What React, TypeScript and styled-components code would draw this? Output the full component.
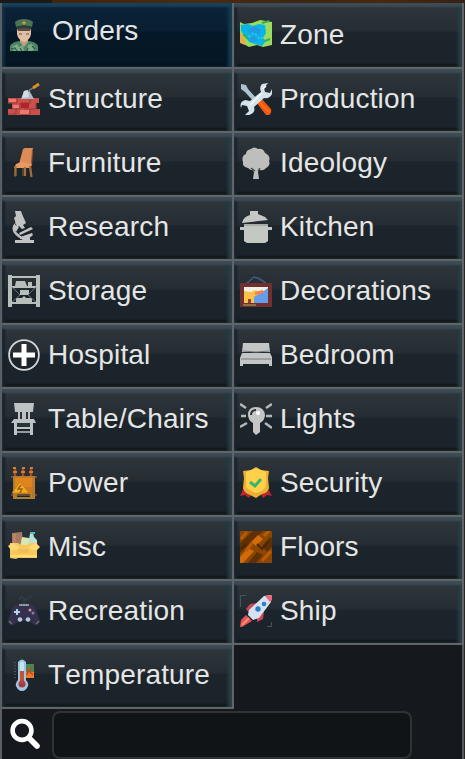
import React from "react";
import styled, { createGlobalStyle } from "styled-components";

const GlobalStyle = createGlobalStyle`
  *, *::before, *::after { box-sizing: border-box; }
  body { margin: 0; background: #15191e; overflow: hidden; }
`;

const Window = styled.main`
  width: 465px;
  height: 759px;
  display: flex;
  flex-direction: column;
  overflow: hidden;
  background: #15191e;
  border-right: 1px solid #29271e;
  font-family: "Liberation Sans", Arial, sans-serif;
`;

const Scenery = styled.div`
  height: 3px;
  flex: none;
  background: linear-gradient(90deg, #1c1a18 52px, #40250f 52px, #4a2b12 200px, #3b2614 300px, #49280f 380px, #352315);
`;

const Panel = styled.div`
  flex: 1;
  display: flex;
  flex-direction: column;
  border-left: 2px solid #5a5f65;
  border-right: 2px solid #535b65;
`;

const Menu = styled.nav`
  display: grid;
  grid-template-columns: 232px 228px;
  grid-template-rows: 66px;
  grid-auto-rows: 64px;
  height: 706px;
  margin-right: -2px;
`;

const Entry = styled.button<{ $active?: boolean; $edge?: boolean; $first?: boolean }>`
  display: flex;
  align-items: flex-start;
  gap: 8px;
  width: ${(p) => (p.$edge ? 230 : 232)}px;
  height: 100%;
  margin: 0;
  padding: ${(p) => (p.$first ? 16 : 14)}px 0 0 6px;
  border: 0 solid #626466;
  border-width: 0 2px 2px 0;
  color: #e5e5e5;
  font: inherit;
  text-align: left;
  background: ${(p) =>
    p.$active
      ? "linear-gradient(#0c2439 0, #081e31 28px, #051827 29px, #051724 100%)"
      : "linear-gradient(#2f373d 0, #252d33 28px, #1c252c 29px, #1b232a 100%)"};
  box-shadow: ${(p) =>
    p.$active
      ? "inset 0 4px 2px #17405a, inset -4px 0 3px #123a52, inset 3px 0 2px #0f2e45, inset 0 -3px 2px #03111c"
      : "inset 0 4px 2px #3c4b55, inset -4px 0 3px #293d47, inset 3px 0 2px #172229, inset 0 -3px 2px #10171b"};
`;

const IconBox = styled.svg`
  width: 32px;
  height: 32px;
  flex: none;
  overflow: hidden;
  filter: blur(0.4px);
`;

const Label = styled.span<{ $active?: boolean }>`
  font-size: 28px;
  line-height: 32px;
  letter-spacing: 0.16px;
  font-kerning: none;
  white-space: nowrap;
  margin: ${(p) => (p.$active ? "-4px 0 0 4px" : "0")};
`;

const SearchBar = styled.div`
  flex: 1;
  display: flex;
  align-items: flex-start;
  padding: 2px 0 0 6px;
  gap: 10px;
`;

const SearchIcon = styled.svg`
  width: 34px;
  height: 34px;
  margin-top: 6px;
  flex: none;
`;

const SearchField = styled.input`
  width: 360px;
  height: 48px;
  margin-left: 0;
  padding: 0 12px;
  border: 2px solid #303336;
  border-radius: 8px;
  outline: none;
  background: #101417;
  color: #e5e5e5;
  font: inherit;
  font-size: 26px;
`;

const icons: Record<string, React.ReactNode> = {
  Orders: (
    <>
      <path d="M2 32V27q2-4 9-5h10q7 1 9 5v5z" fill="#4c8467" />
      <path d="M4 28l5-3 2 3 4-2 1 6H6zM20 26l4-1 3 4-3 3h-5z" fill="#7dab83" />
      <path d="M3 30l4-1 2 3M24 27l3 3M12 29l2 3M20 29l-1 3" stroke="#2d5b48" strokeWidth="1.2" fill="none" />
      <path d="M12 20h8v3l-4 5-4-5z" fill="#c69c83" />
      <path d="M9 10h14v5q-1 6-7 8-6-2-7-8z" fill="#e1bfa5" />
      <path d="M9 9h14l-1 3H10z" fill="#5b4a43" />
      <path d="M11 15h3M18 15h3" stroke="#685148" />
      <path d="M7 3q3-3 9-3t9 3l-1 5q-8-3-16 0z" fill="#4b7455" />
      <path d="M8 8q8-3 16 0l-1 2q-7-2-14 0z" fill="#293f34" />
      <circle cx="16" cy="4" r="1.8" fill="#c29b3f" />
    </>
  ),
  Structure: (
    <>
      <path d="M0 15h31v5h-3v6h4v6H0v-6h4v-6H0z" fill="#ca504b" />
      <path d="M0 20h9v-5M12 20h10v-5M4 26h8v-6M16 26h12v-6M0 31h8v-5M12 31h10v-5" stroke="#9b3d40" strokeWidth="1.1" fill="none" />
      <path d="M13 20h8v5h-8z" fill="#b1222b" />
      <path d="M12 27h9v4h-9zM1 16h7v3H1zM5 22h6v3H5z" fill="#f0796c" />
      <path d="M13 16l3-8 5-1 5 9z" fill="#acb9c1" />
      <path d="M16 8l4-1 1 7-7 1z" fill="#d4dce0" />
      <path d="M20 8l5-3" stroke="#69757e" strokeWidth="1.5" />
      <path d="M25 5l6-4" stroke="#db9027" strokeWidth="3" />
    </>
  ),
  Furniture: (
    <>
      <path d="M15 2l2-1h8l-2 17-12-1z" fill="#df8b55" />
      <path d="M24 2h1l-1 17h-1z" fill="#9a542f" />
      <path d="M8 17l5-2 11 2-2 4H6z" fill="#e79a62" />
      <path d="M7.500 19v10M17 20v9M22 19l1.500 11" stroke="#a86c3f" strokeWidth="2.2" />
      <path d="M7 26v4M15 21v8" stroke="#726d22" />
    </>
  ),
  Research: (
    <g fill="#c2c4c3">
      <path d="M7 0h6l1 3 4 9-3 2 2 3-3 1-3-3-2 1-3-9 2-2z" />
      <path d="M9 11q-4 3-2 9l8 7h7v2h4v3H7v-3h8l-5-3q-7-5-5-11l3-4z" />
      <path d="M11 22l12-6 2 2-13 6zM12 26l12-4 1 2-6 5-7-1z" />
      <path d="M6 13l5 3-3 5-3-3z" />
    </g>
  ),
  Storage: (
    <g fill="#b8beb9">
      <path d="M0 0h4v32H0zM28 0h4v32h-4zM3 1h26v2H3zM3 11h26v2H3zM3 27h26v2H3z" />
      <path d="M8 6h9l2 5H7zM20 7h4v4h-4zM12 15h9v5h-9zM8 23h6l2-2 2 2h6v4H8z" />
      <path d="M4 12l8 8-8 7M28 12l-8 8 8 7" fill="none" stroke="#69736f" />
    </g>
  ),
  Hospital: (
    <>
      <circle cx="16" cy="16" r="14.9" fill="none" stroke="#d4d7d9" strokeWidth="1.8" />
      <path d="M13.500 5h5v8.500H27v5h-8.500V27h-5v-8.500H5v-5h8.500z" fill="#fff" />
    </>
  ),
  "Table/Chairs": (
    <g fill="#bdc2c5">
      <path d="M6 0h20l-1 9h-3v7h4l2 4h-3v12h-3v-6H9v6H6V20H3l3-4h4V9H7z" />
      <path d="M12 9h2v7h-2zM18 9h2v7h-2zM9 20h13v4H9z" fill="#29333a" />
      <path d="M9 29h13" stroke="#bdc2c5" strokeWidth="1.5" />
    </g>
  ),
  Power: (
    <>
      <path d="M5 9h22v18H5zM5 27h4v5H5zM22 27h5v5h-5z" fill="#cb7a1d" />
      <path d="M7 10h18v10H7z" fill="#df831d" />
      <path d="M3 10h26M3 28h26M6 9v23M25 9v23" stroke="#9c7946" />
      <path d="M6 31h20" stroke="#a78235" strokeWidth="2" />
      <path d="M7 1v8M15 1v8M23 1v8" stroke="#a34d22" strokeWidth="2.5" />
      <path d="M5 5h4M13 5h4M21 5h4M5 1h3M14 1h3M22 1h3" stroke="#d27b31" strokeWidth="2" />
      <path d="M12 15l9 11H4z" fill="#f4ac20" stroke="#c38320" />
      <path d="M13 18l-3 4h4l-2 4" stroke="#9e5f18" strokeWidth="1.5" fill="none" />
    </>
  ),
  Misc: (
    <>
      <path d="M4 2l10-1 1 13H4z" fill="#a87961" />
      <path d="M5 3h3v9H5z" fill="#bd8165" />
      <path d="M14 6l7 1 2 9H12z" fill="#d6e7b5" />
      <path d="M22 3l3-1 1 4 3 3v6h-8V8z" fill="#b9e1d5" />
      <path d="M22 1h5v2h-5z" fill="#58b9cb" />
      <path d="M2 12h8l3 2h6l2-2h8v15H10l-2 1-6-1z" fill="#f8c858" />
      <path d="M0 15l4-3 8 4-4 3H3zM20 16l8-4 4 4-3 3h-5z" fill="#ffd878" />
      <path d="M10 18h11l-1 4h-9z" fill="#efbd59" />
      <path d="M3 25h26" stroke="#ffdc77" strokeWidth="2" />
    </>
  ),
  Recreation: (
    <>
      <path d="M11 5q2-5 4-2t4 1l5-3M16 5v5" stroke="#343d4a" strokeWidth="1.4" fill="none" />
      <path d="M7 10l7-1h8l5 3 5 14q-1 5-5 4l-6-4H11l-6 4q-4 1-5-4L4 13z" fill="#35304e" />
      <path d="M11 10h10" stroke="#8797a3" strokeWidth="2" />
      <path d="M9 14v6M6 17h6" stroke="#afd4ec" strokeWidth="2" />
      <circle cx="22" cy="15" r="1.5" fill="#c099a8" />
      <circle cx="25" cy="18" r="1.5" fill="#8b78a5" />
      <circle cx="12" cy="24.5" r="2.3" fill="#b4cadc" />
      <circle cx="20" cy="24.5" r="2.3" fill="#b4cadc" />
      <path d="M1 26l3 3M31 26l-3 3" stroke="#60746b" strokeWidth="1.6" />
    </>
  ),
  Temperature: (
    <>
      <path d="M7 3v18" stroke="#46515a" strokeWidth="2" strokeDasharray="1 2" />
      <path d="M18 5h8v8h-8z" fill="#458850" />
      <path d="M18 13h8v6h-8z" fill="#ef782e" />
      <path d="M18 9l7 7M18 16l7-9" stroke="#b84c27" strokeWidth="1.5" />
      <path d="M10 3q4-5 8 0v18q3 3 2 6-2 5-6 5t-6-5q-1-3 2-6z" fill="#9fc6e2" />
      <path d="M12 4q2-3 4 0v17h-4z" fill="#c5e4f1" />
      <path d="M12 12h4v10h-4z" fill="#c35136" />
      <circle cx="14" cy="25" r="3.6" fill="#b8403c" />
      <path d="M11 26h6" stroke="#7c3451" />
    </>
  ),
  Zone: (
    <>
      <path d="M0 3l4 2 8-1 8-3 12 2v23l-9 2-6-2-8 2-9-5z" fill="#9bdb5d" />
      <path d="M1 6l7-1 5 2 6-2 6 1 1 8-3 5 3 3-4 5-7-2-6-2-4-6-4-5z" fill="#09b4e6" />
      <path d="M8 11l6-4 7 4-2 5-4-2-5 2zM10 19l4-2 4 4-7 2z" fill="#249be0" />
      <path d="M0 13l6 9-1 4-5-2z" fill="#e0ae4e" />
      <path d="M22 4l7-2M25 22l5-2M3 15l5 5" stroke="#3cac56" strokeWidth="2" />
      <path d="M9 18q4-7 8-1t6-1" fill="none" stroke="#3ccbe8" strokeWidth="1.5" strokeDasharray="2 2" />
    </>
  ),
  Production: (
    <>
      <path d="M1 1l5 1 2 4 10 11-3 3L5 9 1 6z" fill="#aac4d0" />
      <path d="M16 19l5-4 10 11q1 4-2 6h-3z" fill="#f25910" />
      <path d="M20 20l9 9" stroke="#ff6e15" strokeWidth="2" />
      <path d="M22 1l6-1-4 5 1 4 5 1 2-4v5q-2 5-8 4L14 24q2 6-5 8H5l4-4-2-5-5-1-1 3q-2-6 4-8l5 1L21 9q-2-5 1-8z" fill="#d4e3e9" />
      <path d="M22 10L10 22M26 3l-3 3" stroke="#f4fbfc" strokeWidth="1.5" />
    </>
  ),
  Ideology: (
    <g fill="#bebfbd">
      <path d="M11 2q3-3 7 0 5-1 7 4 6 3 4 8 2 4-3 7-3 4-9 1-5 3-9-1-6-1-5-6-2-6 3-8 0-4 5-5z" />
      <path d="M10 19l5 2 6-2-3 6 1 7h-6l1-7z" />
      <path d="M11 21l4 3M20 21l-2 3" stroke="#3b4447" strokeWidth="1.3" />
    </g>
  ),
  Kitchen: (
    <g fill="#c5c7c5">
      <path d="M10 0h8v3l7 3 3 3-26 3q1-6 8-8z" />
      <path d="M4 13h24v3h4v3h-4v11l-3 2H7l-3-2V19H0v-3h4z" />
      <path d="M4 14h24" stroke="#8c9392" />
    </g>
  ),
  Decorations: (
    <>
      <path d="M7 8l7-6 4 1 8 5" stroke="#425985" strokeWidth="1.5" fill="none" />
      <path d="M5 .5h22" stroke="#222c33" />
      <path d="M0 8h32v24H0z" fill="#713030" />
      <path d="M4 12h24v16H4z" fill="#eef0e6" />
      <path d="M4 16l7 1 5-2 4 4-4 9H4z" fill="#f9c34b" />
      <path d="M14 22l7-4 7-5v15H14z" fill="#649dea" />
      <path d="M15 17l8-2 1 3-9 2z" fill="#f57d4e" />
      <path d="M8 24h3v4H8z" fill="#924234" />
      <path d="M3 30h13" stroke="#926c45" strokeWidth="2" />
    </>
  ),
  Bedroom: (
    <g fill="#c4c5c5">
      <path d="M3 4h26l1 9H2z" />
      <path d="M2 14h28l2 4v9h-3v-2H3v2H0v-8z" />
      <path d="M3 12q13 2 26 0M1 20h30" stroke="#737a7e" fill="none" />
    </g>
  ),
  Lights: (
    <>
      <path d="M0 1l6 4M1 13h5M0 24l7-4M32 1l-6 4M26 13h6M25 20l7 5" stroke="#b5b8b8" strokeWidth="2.5" />
      <path d="M8 12q0-8 8-8t9 8q0 5-5 8v9l-4 3-3-3v-9q-5-3-5-8z" fill="#c4c6c6" />
      <path d="M11 12q0-5 5-5" stroke="#2c353a" strokeWidth="2" fill="none" />
      <circle cx="18" cy="10" r="2" fill="#fff" />
    </>
  ),
  Security: (
    <>
      <path d="M5 18L0 29l5-1 4 3 6-10M26 18l6 11-5-1-4 3-6-10" fill="#b72632" />
      <path d="M3 4l8-1 5-3 5 3 8 1-1 7 1 10q-1 5-7 6l-6 4-6-3q-6-2-7-7l1-10z" fill="#edaf32" />
      <path d="M6 5l10-4 10 4v14q-2 5-10 7-9-3-10-7z" fill="#ffd04c" />
      <path d="M10 15l5 4 6-7" stroke="#38b66d" strokeWidth="3" fill="none" />
    </>
  ),
  Floors: (
    <>
      <path d="M0 0h32v32H0z" fill="#8c4600" />
      <path d="M0 12L13 0h10L0 22zM8 32l9-11 6 3-7 8zM22 15l8-9 2 1v9l-5 5z" fill="#5f3005" />
      <path d="M0 26l8-9 6 3-11 12H0zM11 11l7-7 5 4-7 7z" fill="#d46b0a" />
      <path d="M1 8l6-7M22 30l9-10M24 5l5-5M6 20l6-8" stroke="#b75b04" strokeWidth="3" />
      <path d="M17 13l5 5 7-8M1 18l5-5" stroke="#4a2806" strokeWidth="2" fill="none" />
    </>
  ),
  Ship: (
    <>
      <path d="M.5 12V.5H6M27 31.500h4.500V27" stroke="#4b5358" fill="none" />
      <path d="M6 14l4-5 7-1-6 12zM17 22l7-6-1 8-6 3z" fill="#c84757" />
      <path d="M24 1l7-1v7L19 23l-6 2-5-5 1-5z" fill="#d8e1ef" />
      <path d="M25 1l7-1v5l-2 2z" fill="#eb6974" />
      <circle cx="24" cy="9" r="2.3" fill="#2881cc" />
      <circle cx="18" cy="14" r="2.7" fill="#277cd0" />
      <path d="M1 25l5-5 6 6-5 3-5 3H0z" fill="#e35458" />
      <path d="M2 30l7-7" stroke="#ff8b70" strokeWidth="2" />
    </>
  ),
};

const categories = [
  "Orders", "Zone", "Structure", "Production", "Furniture", "Ideology", "Research",
  "Kitchen", "Storage", "Decorations", "Hospital", "Bedroom", "Table/Chairs", "Lights",
  "Power", "Security", "Misc", "Floors", "Recreation", "Ship", "Temperature",
];

export default function App() {
  return (
    <Window>
      <GlobalStyle />
      <Scenery />
      <Panel>
        <Menu>
          {categories.map((name, i) => {
            const active = name === "Orders";
            return (
              <Entry key={name} $active={active} $edge={i % 2 === 1} $first={i < 2}>
                <IconBox viewBox="0 0 32 32" aria-hidden="true">{icons[name]}</IconBox>
                <Label $active={active}>{name}</Label>
              </Entry>
            );
          })}
        </Menu>
        <SearchBar>
          <SearchIcon viewBox="0 0 34 34" aria-hidden="true">
            <circle cx="14" cy="13.500" r="9.4" fill="none" stroke="#fff" strokeWidth="4.6" />
            <path d="M21 21l8 8" stroke="#fff" strokeWidth="5.6" strokeLinecap="round" />
          </SearchIcon>
          <SearchField aria-label="Search" />
        </SearchBar>
      </Panel>
    </Window>
  );
}
